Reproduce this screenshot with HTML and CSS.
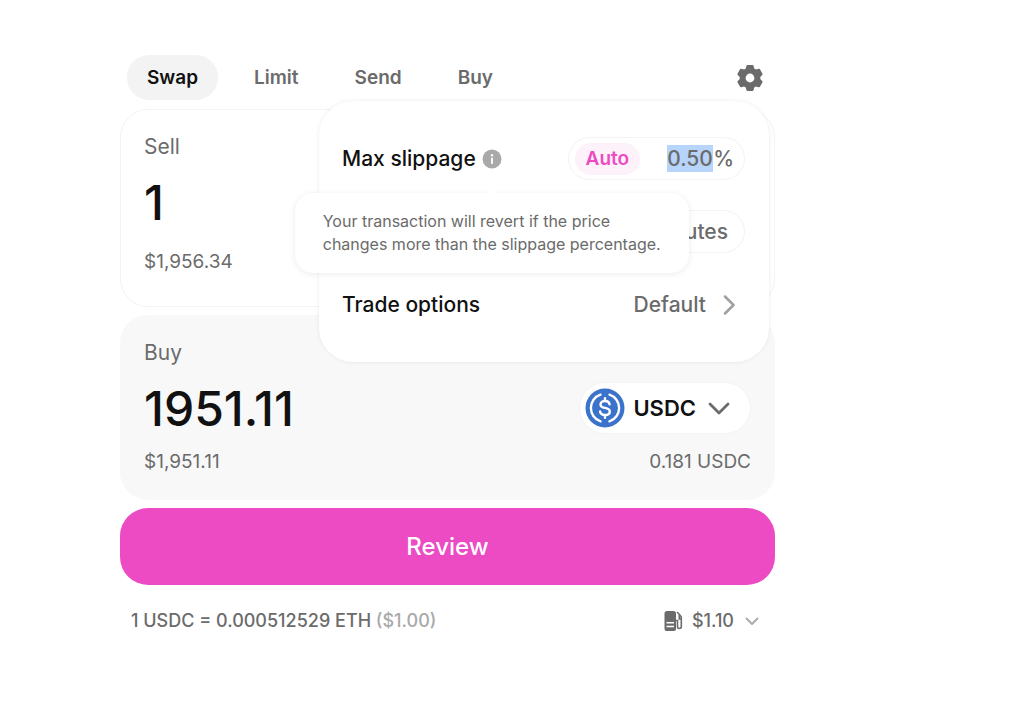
FILE: index.html
```html
<!DOCTYPE html>
<html lang="en">
<head>
    <meta charset="UTF-8">
    <meta name="viewport" content="width=device-width, initial-scale=1.0">
    <title>Swap</title>
    <link rel="stylesheet" href="styles.css">
</head>
<body>
    <main class="swap">
        <header class="swap-header">
            <nav class="tabs">
                <a href="#swap" class="tab active">Swap</a>
                <a href="#limit" class="tab">Limit</a>
                <a href="#send" class="tab">Send</a>
                <a href="#buy" class="tab">Buy</a>
            </nav>
            <button type="button" class="settings-btn" aria-label="Settings">
                <svg width="28" height="28" viewBox="0 0 28 28">
                    <path fill="#6b6b6b" fill-rule="evenodd" d="M11.6 1h4.8q1 0 1.2 1l.6 2.6 1.8 1 2.6-.8q1-.3 1.500.6l2.300 4q.5.9-.2 1.600L24.300 12.900v2.200l1.900 1.900q.7.700.2 1.600l-2.300 4q-.5.900-1.500.6l-2.600-.8-1.800 1-.6 2.600q-.2 1-1.200 1h-4.800q-1 0-1.200-1l-.6-2.600-1.800-1-2.600.8q-1 .3-1.500-.6l-2.300-4q-.5-.9.2-1.600l1.900-1.900v-2.200L1.800 11q-.7-.7-.2-1.600l2.300-4q.5-.9 1.500-.6l2.600.8 1.800-1L10.400 2q.2-1 1.200-1zM14 9.600a4.400 4.400 0 1 0 0 8.800 4.400 4.400 0 0 0 0-8.800z"/>
                </svg>
            </button>

            <section class="settings-menu">
                <div class="setting">
                    <label class="setting-name" for="slippage">Max slippage</label>
                    <span class="info">
                        <svg width="20" height="20" viewBox="0 0 20 20">
                            <circle cx="10" cy="10" r="9.500" fill="#a9a9a9"/>
                            <circle cx="10" cy="6.200" r="1.200" fill="#fff"/>
                            <path d="M10 9.400v4.800" stroke="#fff" stroke-width="1.800" stroke-linecap="round"/>
                        </svg>
                        <span class="tooltip" role="tooltip">Your transaction will revert if the price changes more than the slippage percentage.</span>
                    </span>
                    <div class="pill">
                        <button type="button" class="auto-btn">Auto</button>
                        <input id="slippage" class="slippage-input" type="text" value="0.50">
                        <span class="unit">%</span>
                    </div>
                </div>
                <div class="setting">
                    <div class="pill">
                        <input class="deadline-input" type="text" aria-label="Transaction deadline">
                        <span class="minutes">minutes</span>
                    </div>
                </div>
                <div class="setting">
                    <span class="setting-name">Trade options</span>
                    <button type="button" class="options-btn">Default
                        <svg width="12" height="20" viewBox="0 0 12 20"><path d="M2 1.500L10.500 10 2 18.500" fill="none" stroke="#a0a0a0" stroke-width="2.500" stroke-linecap="round" stroke-linejoin="round"/></svg>
                    </button>
                </div>
            </section>
        </header>

        <section class="card sell">
            <label class="card-label" for="sellAmount">Sell</label>
            <input id="sellAmount" class="amount" type="text" value="1">
            <div class="card-foot"><span>$1,956.34</span></div>
        </section>

        <section class="card buy">
            <label class="card-label" for="buyAmount">Buy</label>
            <div class="amount-row">
                <input id="buyAmount" class="amount" type="text" value="1951.11">
                <button type="button" class="token-btn">
                    <svg width="40" height="40" viewBox="0 0 40 40">
                        <circle cx="20" cy="20" r="19.500" fill="#3a73c9"/>
                        <g fill="none" stroke="#fff" stroke-width="2.400" stroke-linecap="round">
                            <path d="M15.500 6.700a14 14 0 0 0 0 26.600M24.500 6.700a14 14 0 0 1 0 26.600"/>
                            <path d="M24.600 16.300c-.4-2.200-2-3.300-4.600-3.300-2.700 0-4.500 1.300-4.500 3.400 0 2.400 2 3 4.500 3.500 2.700.5 4.800 1.200 4.800 3.600 0 2.200-1.900 3.500-4.800 3.500-2.800 0-4.500-1.200-4.900-3.500M20 10.300V13M20 27v2.700"/>
                        </g>
                    </svg>
                    USDC
                    <svg class="token-arrow" width="22" height="13" viewBox="0 0 22 13"><path d="M2 2l9 9 9-9" fill="none" stroke="#6b6b6b" stroke-width="2.800" stroke-linecap="round" stroke-linejoin="round"/></svg>
                </button>
            </div>
            <div class="card-foot"><span>$1,951.11</span><span>0.181 USDC</span></div>
        </section>

        <button type="button" class="review-btn">Review</button>

        <footer class="rate">
            <span>1 USDC = 0.000512529 ETH <span class="rate-usd">($1.00)</span></span>
            <button type="button" class="gas-btn">
                <svg width="20" height="22" viewBox="0 0 20 22">
                    <path fill="#6b6b6b" fill-rule="evenodd" d="M3 1h6.500q2.500 0 2.500 2.500V19q0 2-2 2H2.500q-2 0-2-2V3.500Q.5 1 3 1zM2.500 12v1.500H10V12zM2.500 15.800v1.500H10v-1.500z"/>
                    <path d="M12.500 10.500h1v6.300q0 1.700 1.900 1.700t1.900-1.700V7.500q0-1.200-1-2L13.500 2.500M17.300 9h-2V5" fill="none" stroke="#6b6b6b" stroke-width="1.600" stroke-linecap="round"/>
                </svg>
                $1.10
                <svg class="gas-arrow" width="14" height="9" viewBox="0 0 14 9"><path d="M1.500 1.500L7 7l5.500-5.500" fill="none" stroke="#a9a9a9" stroke-width="1.800" stroke-linecap="round" stroke-linejoin="round"/></svg>
            </button>
        </footer>
    </main>
</body>
</html>
```
FILE: styles.css
```css
* {
    box-sizing: border-box;
}
body {
    margin: 0;
    padding: 55px 120px;
    background-color: #fff;
    color: #111;
    font-family: Inter, "Liberation Sans", sans-serif;
    font-size: 18px;
    font-weight: 500;
}
button,
input {
    margin: 0;
    padding: 0;
    border: none;
    background: none;
    color: inherit;
    font: inherit;
}
button {
    cursor: pointer;
}
input {
    outline: none;
}
svg {
    display: block;
    flex: none;
}
.swap {
    max-width: 655px;
}
.swap-header {
    position: relative;
    display: flex;
    justify-content: space-between;
    align-items: center;
    margin-bottom: 9px;
    padding: 0 11px 0 7px;
}
.tabs {
    display: flex;
    gap: 16px;
}
.tab {
    padding: 0 20px;
    border-radius: 22px;
    color: #6b6b6b;
    font-size: 19px;
    font-weight: 600;
    line-height: 45px;
    text-decoration: none;
}
.tab.active {
    background-color: #f3f3f3;
    color: #111;
}
.settings-menu {
    position: absolute;
    z-index: 1;
    top: 46px;
    right: 6px;
    display: flex;
    flex-direction: column;
    gap: 30px;
    width: 450px;
    padding: 36px 24px 36px 23px;
    border-radius: 34px;
    background-color: #fff;
    box-shadow: 0 0 4px rgba(0, 0, 0, 0.08);
    font-size: 21px;
}
.setting {
    display: flex;
    align-items: center;
    height: 43px;
}
.info {
    position: relative;
    margin-left: 6px;
}
.tooltip {
    position: absolute;
    z-index: 2;
    top: 44px;
    left: 50%;
    width: 394px;
    padding: 17px 24px 17px 28px;
    border-radius: 18px;
    background-color: #fff;
    box-shadow: 0 1px 6px rgba(0, 0, 0, 0.08);
    color: #6b6b6b;
    font-size: 16px;
    font-weight: 400;
    line-height: 23px;
    transform: translateX(-50%);
}
.tooltip::before {
    content: "";
    position: absolute;
    top: -4px;
    left: 50%;
    width: 10px;
    height: 10px;
    background-color: #fff;
    transform: translateX(-50%) rotate(45deg);
}
.pill {
    display: flex;
    align-items: center;
    height: 43px;
    margin-left: auto;
    padding: 0 10px 0 6px;
    border: 1px solid #f3f3f3;
    border-radius: 22px;
    color: #6b6b6b;
}
.auto-btn {
    height: 32px;
    margin-right: 27px;
    padding: 0 11px;
    border-radius: 16px;
    background-color: #fdf1fa;
    color: #ec4bc4;
    font-size: 19px;
    font-weight: 600;
}
.slippage-input {
    width: 46px;
    height: 27px;
    background-color: #b7d4fb;
}
.deadline-input {
    width: 32px;
}
.minutes {
    margin-right: 6px;
}
.options-btn {
    display: flex;
    align-items: center;
    gap: 17px;
    margin-left: auto;
    padding-right: 10px;
    color: #6b6b6b;
}
.card {
    margin-bottom: 8px;
    padding: 24px 23px;
    border: 1px solid #f3f3f3;
    border-radius: 28px;
    color: #6b6b6b;
}
.card-label {
    display: block;
    font-size: 21px;
    font-weight: 400;
    line-height: 26px;
}
.amount {
    width: 100%;
    height: 60px;
    color: #111;
    font-size: 48px;
}
.card-foot {
    display: flex;
    justify-content: space-between;
    font-size: 19px;
    font-weight: 400;
    line-height: 24px;
}
.sell {
    height: 198px;
}
.sell .amount {
    display: block;
    margin: 12px 0 18px;
}
.buy {
    padding-bottom: 25px;
    border-color: #f8f8f8;
    background-color: #f8f8f8;
}
.amount-row {
    display: flex;
    align-items: center;
    margin: 12px 0;
}
.token-btn {
    display: flex;
    align-items: center;
    gap: 8px;
    height: 52px;
    padding: 0 20px 0 5px;
    border: 1px solid #f3f3f3;
    border-radius: 26px;
    background-color: #fff;
    color: #111;
    font-size: 22px;
    font-weight: 600;
}
.token-arrow {
    margin-left: 4px;
}
.review-btn {
    width: 100%;
    height: 77px;
    border-radius: 28px;
    background-color: #ec4bc4;
    color: #fff;
    font-size: 24px;
}
.rate {
    display: flex;
    justify-content: space-between;
    align-items: center;
    padding: 24px 16px 0 11px;
    color: #6b6b6b;
    font-size: 18px;
    line-height: 24px;
}
.rate-usd {
    color: #a9a9a9;
}
.gas-btn {
    display: flex;
    align-items: center;
    gap: 8px;
}
.gas-arrow {
    margin-left: 3px;
}
```
